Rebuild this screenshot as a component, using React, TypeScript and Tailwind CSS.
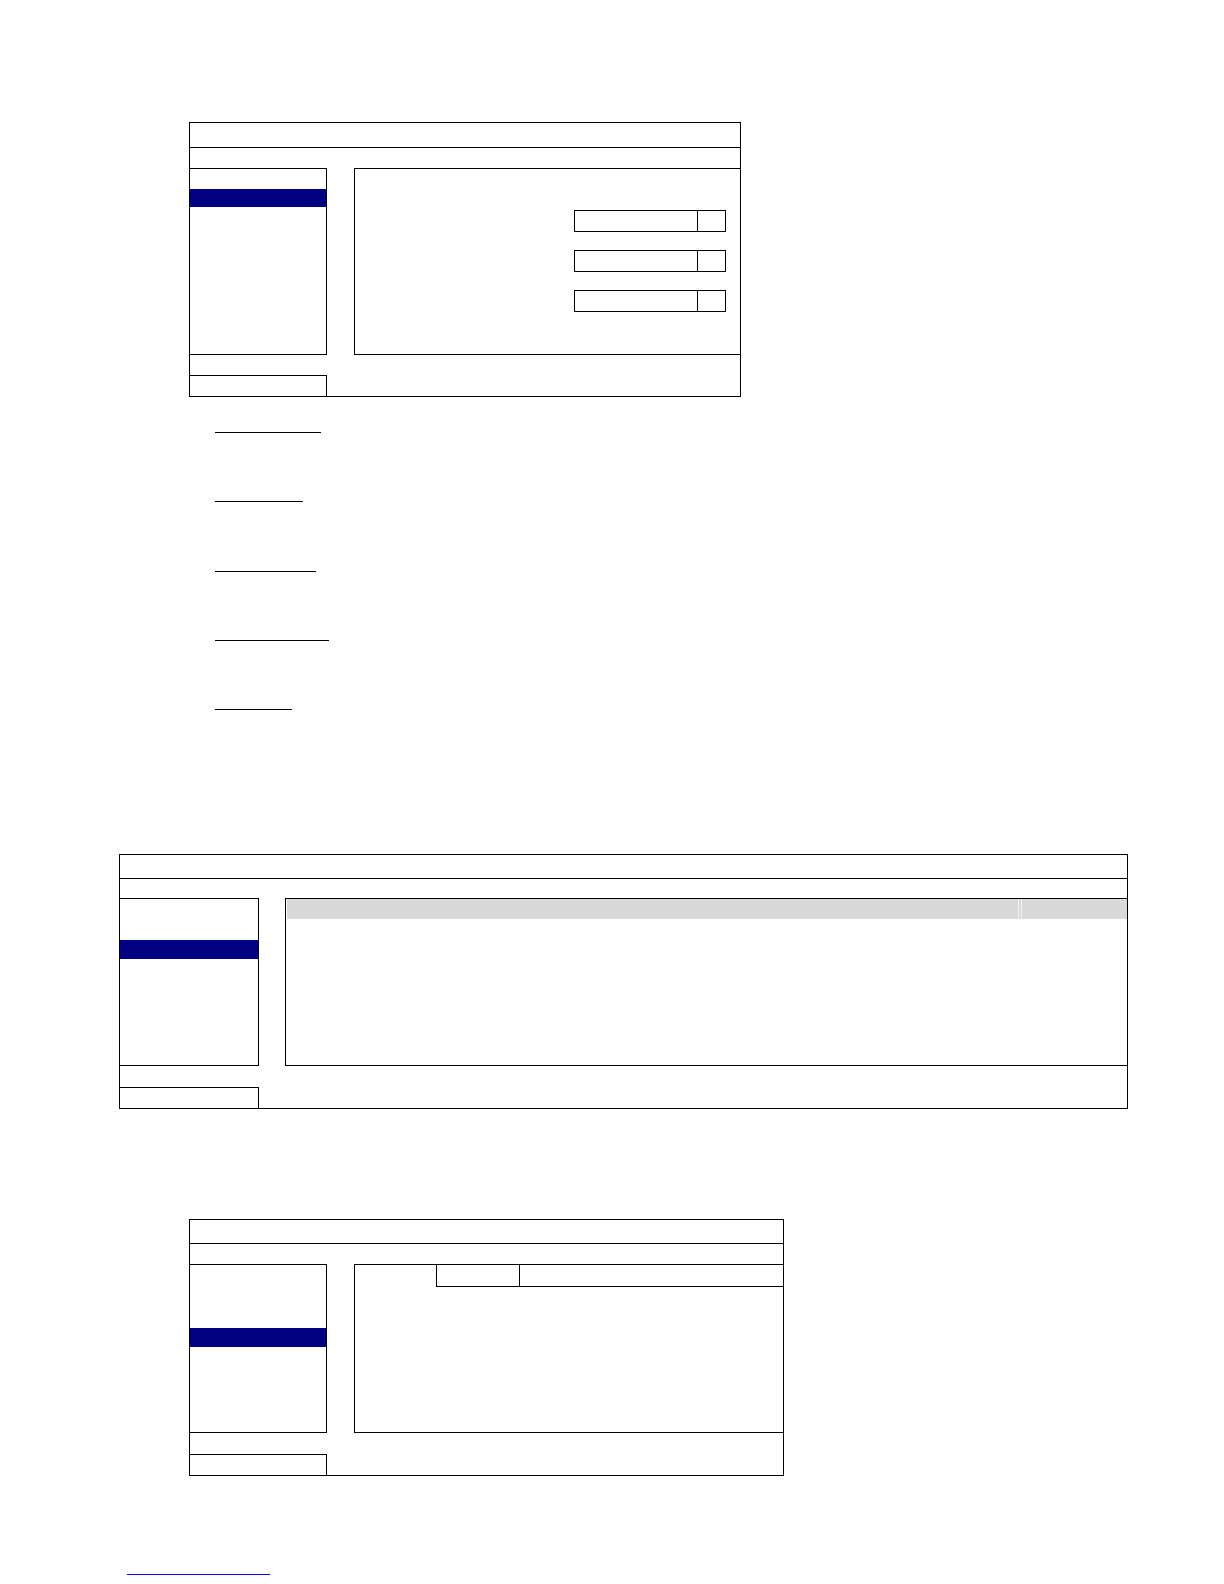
import React from "react";

function InputBox() {
  return (
    <div className="flex h-[22px] w-[152px] border border-black">
      <div className="flex-1 border-r border-black" />
      <div className="w-[27px]" />
    </div>
  );
}

function Underline({ w, mt }: { w: string; mt: string }) {
  return <div className={`${mt} ${w} h-px bg-black`} />;
}

export default function App() {
  return (
    <div className="w-[1224px] h-[1584px] bg-white pt-[122px] font-['Liberation_Sans',sans-serif] overflow-hidden">
      {/* Frame 1 */}
      <div className="ml-[189px] w-[552px] border border-black">
        <div className="h-[25px] border-b border-black" />
        <div className="h-[20px]" />
        <div className="flex h-[187px]">
          <div className="w-[137px] border-t border-r border-b border-black">
            <div className="mt-[20px] h-[18px] bg-[#000080]" />
          </div>
          <div className="w-[27px]" />
          <div className="flex-1 border-t border-l border-b border-black">
            <div className="ml-[219px] mt-[41px] flex flex-col gap-[18px]">
              <InputBox />
              <InputBox />
              <InputBox />
            </div>
          </div>
        </div>
        <div className="h-[20px]" />
        <div className="h-[21px] w-[137px] border-t border-r border-black" />
      </div>

      {/* Underlined headings */}
      <div className="ml-[215px] flex flex-col">
        <Underline mt="mt-[35px]" w="w-[106px]" />
        <Underline mt="mt-[68px]" w="w-[88px]" />
        <Underline mt="mt-[69px]" w="w-[101px]" />
        <Underline mt="mt-[68px]" w="w-[114px]" />
        <Underline mt="mt-[68px]" w="w-[77px]" />
      </div>

      {/* Frame 2 */}
      <div className="ml-[119px] mt-[144px] w-[1009px] border border-black">
        <div className="h-[24px] border-b border-black" />
        <div className="h-[19px]" />
        <div className="flex h-[168px]">
          <div className="w-[139px] border-t border-r border-b border-black">
            <div className="mt-[41px] h-[19px] bg-[#000080]" />
          </div>
          <div className="w-[26px]" />
          <div className="flex-1 border-t border-l border-b border-black">
            <div className="ml-[1px] flex h-[20px] bg-[#d9d9d9]">
              <div className="w-[731px]" />
              <div className="w-[1px] bg-[#f4f4f4]" />
              <div className="w-[2px]" />
              <div className="w-[1px] bg-[#f4f4f4]" />
              <div className="flex-1" />
            </div>
          </div>
        </div>
        <div className="h-[21px]" />
        <div className="h-[21px] w-[139px] border-t border-r border-black" />
      </div>

      {/* Frame 3 */}
      <div className="ml-[189px] mt-[110px] w-[595px] border border-black">
        <div className="h-[24px] border-b border-black" />
        <div className="h-[20px]" />
        <div className="flex h-[169px]">
          <div className="w-[137px] border-t border-r border-b border-black">
            <div className="mt-[63px] h-[19px] bg-[#000080]" />
          </div>
          <div className="w-[27px]" />
          <div className="flex-1 border-t border-l border-b border-black">
            <div className="flex h-[22px]">
              <div className="w-[81px]" />
              <div className="w-[84px] border-l border-r border-b border-black" />
              <div className="flex-1 border-b border-black" />
            </div>
          </div>
        </div>
        <div className="h-[21px]" />
        <div className="h-[21px] w-[137px] border-t border-r border-black" />
      </div>

      {/* Footer link line */}
      <div className="ml-[127px] mt-[98px] h-px w-[143px] bg-[#0000ff]" />
    </div>
  );
}
